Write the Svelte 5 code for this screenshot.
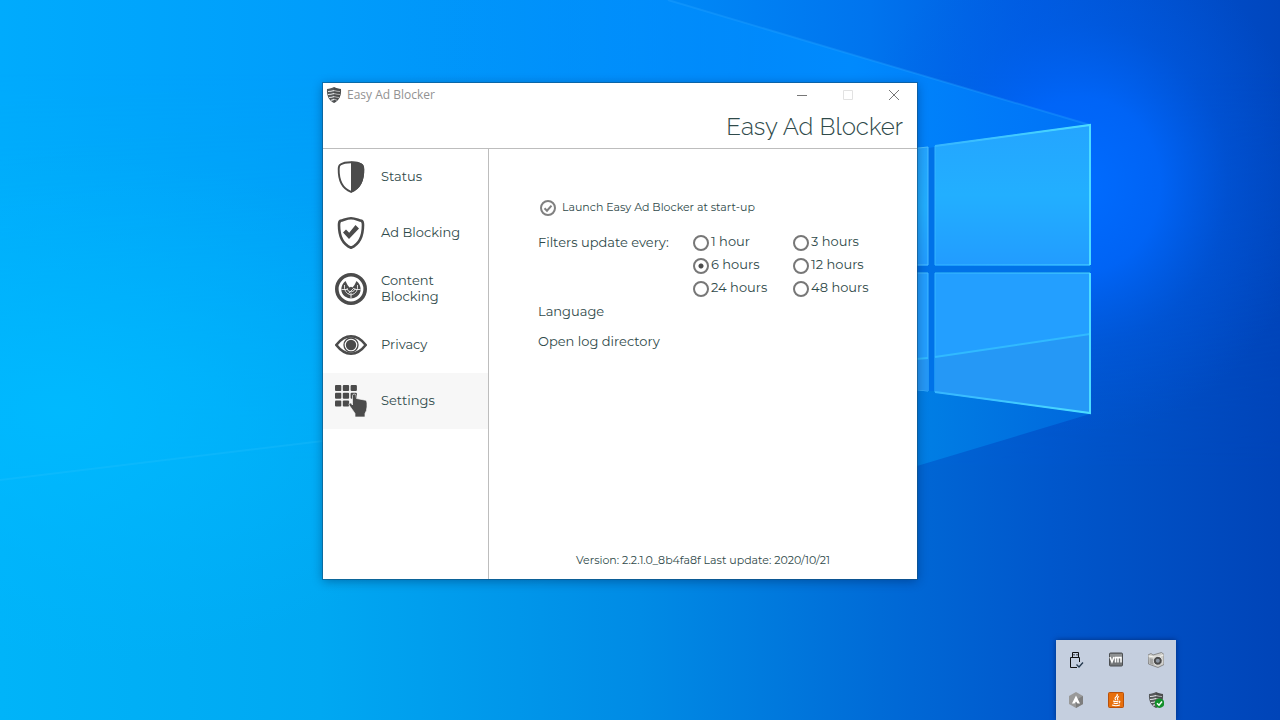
<script lang="ts">
  type Page = { id: string; label: string };

  const pages: Page[] = [
    { id: 'status', label: 'Status' },
    { id: 'ads', label: 'Ad Blocking' },
    { id: 'content', label: 'Content Blocking' },
    { id: 'privacy', label: 'Privacy' },
    { id: 'settings', label: 'Settings' }
  ];

  const intervals = [
    { hours: 1, label: '1 hour' },
    { hours: 3, label: '3 hours' },
    { hours: 6, label: '6 hours' },
    { hours: 12, label: '12 hours' },
    { hours: 24, label: '24 hours' },
    { hours: 48, label: '48 hours' }
  ];

  const trayItems = ['Safely remove hardware', 'VMware Tools', 'Camera', 'Updates', 'Java', 'Easy Ad Blocker'];

  let current = $state('settings');
  let launchAtStartup = $state(true);
  let updateEvery = $state(6);
</script>

{#snippet stripedShield()}
  <path d="M8 0C10 1.200 12.500 1.800 15 2C15.500 9 13 13.500 8 16C3 13.500 .5 9 1 2C3.500 1.800 6 1.200 8 0Z" fill="#55585a" />
  <path d="M2 4.500Q5 4.500 8 3.500Q11 4.500 14 4.500M2 7.500Q5 7.500 8 6.500Q11 7.500 14 7.500M3 10.500Q6 10.500 8 9.500Q11 10.500 13 10.500M5 13.200Q7 13 8 12.300Q10 13 11 13.200" fill="none" stroke="#e4e6e8" stroke-width="1.100" />
  <path d="M8 0C10 1.200 12.500 1.800 15 2C15.500 9 13 13.500 8 16Z" fill="#333" fill-opacity=".3" />
{/snippet}

<div class="desktop">
  <svg class="wallpaper" viewBox="0 0 1280 720" preserveAspectRatio="xMidYMid slice" aria-hidden="true">
    <defs>
      <linearGradient id="sky" x1="0" y1="0" x2="1" y2="0">
        <stop offset="0" stop-color="#00abfd" />
        <stop offset=".25" stop-color="#009dfb" />
        <stop offset=".5" stop-color="#008cf8" />
        <stop offset=".68" stop-color="#0074ee" />
        <stop offset=".8" stop-color="#005ce0" />
        <stop offset="1" stop-color="#0046be" />
      </linearGradient>
      <linearGradient id="floor" x1="0" y1="0" x2="1" y2="0">
        <stop offset="0" stop-color="#00b4f9" />
        <stop offset=".25" stop-color="#00a8f2" />
        <stop offset=".5" stop-color="#008be5" />
        <stop offset=".7" stop-color="#0069d6" />
        <stop offset=".82" stop-color="#0057cc" />
        <stop offset="1" stop-color="#0044b8" />
      </linearGradient>
      <linearGradient id="fade" x1="0" y1="0" x2="0" y2="1">
        <stop offset=".1" stop-color="#000" />
        <stop offset=".65" stop-color="#fff" />
      </linearGradient>
      <mask id="lower"><rect width="1280" height="720" fill="url(#fade)" /></mask>
      <radialGradient id="left">
        <stop offset="0" stop-color="#00baff" stop-opacity=".9" />
        <stop offset="1" stop-color="#00b4ff" stop-opacity="0" />
      </radialGradient>
      <radialGradient id="halo">
        <stop offset="0" stop-color="#006cff" />
        <stop offset=".35" stop-color="#0068ff" stop-opacity=".8" />
        <stop offset=".65" stop-color="#0060f0" stop-opacity=".3" />
        <stop offset="1" stop-color="#005ce8" stop-opacity="0" />
      </radialGradient>
      <linearGradient id="beamTop" x1="0" y1="0" x2="1" y2="0">
        <stop offset="0" stop-color="#0094ff" stop-opacity="0" />
        <stop offset=".65" stop-color="#008cff" stop-opacity=".9" />
        <stop offset="1" stop-color="#0073f6" stop-opacity=".9" />
      </linearGradient>
      <linearGradient id="beamLow" x1="0" y1="0" x2="1" y2="0">
        <stop offset="0" stop-color="#00a2ee" stop-opacity="0" />
        <stop offset=".7" stop-color="#0086e8" stop-opacity=".9" />
        <stop offset="1" stop-color="#006ade" stop-opacity=".9" />
      </linearGradient>
      <linearGradient id="paneTop" x1="0" y1="0" x2="0" y2="1">
        <stop offset="0" stop-color="#24a5ff" />
        <stop offset=".5" stop-color="#22afff" />
        <stop offset="1" stop-color="#229cff" />
      </linearGradient>
      <linearGradient id="edge" x1="0" y1="0" x2="1" y2="0">
        <stop offset="0" stop-color="#35b5ff" />
        <stop offset="1" stop-color="#4cdcff" />
      </linearGradient>
    </defs>
    <rect width="1280" height="720" fill="url(#sky)" />
    <rect width="1280" height="720" fill="url(#floor)" mask="url(#lower)" />
    <ellipse cx="60" cy="410" rx="420" ry="260" fill="url(#left)" />
    <ellipse cx="1080" cy="185" rx="230" ry="250" fill="url(#halo)" />
    <path d="M668 0L1090 125V268H400V0Z" fill="url(#beamTop)" />
    <path d="M668 0L1090 125" stroke="#26a4ff" stroke-opacity=".35" stroke-width="2" />
    <path d="M400 268H1090V414L917 466L540 586L400 560Z" fill="url(#beamLow)" />
    <path d="M0 480L323 441" stroke="#35c6ff" stroke-opacity=".2" stroke-width="2" />
    <path d="M917 266H1091V272H917ZM928 148L935 147V391H928Z" fill="#0072e8" />
    <path d="M880 152L928 147V265H880Z" fill="url(#paneTop)" stroke="#4cbfff" />
    <path d="M935 146L1090 125V265H935Z" fill="url(#paneTop)" stroke="url(#edge)" />
    <path d="M880 273H928V391L880 386Z" fill="#239fff" stroke="#45baff" />
    <path d="M935 273H1090V413L935 392Z" fill="#239fff" stroke="url(#edge)" />
    <path d="M935 357L1090 334V413L935 392ZM880 362L928 358V391L880 386Z" fill="#2598f6" />
    <path d="M935 357L1090 334M880 362L928 358" stroke="#31baff" stroke-width="2" />
    <path d="M935 392L1090 413V273M1090 265V125L935 146" fill="none" stroke="url(#edge)" stroke-width="2" />
  </svg>

  <main class="window">
    <div class="titlebar">
      <svg class="app-icon" viewBox="0 0 16 16" aria-hidden="true">{@render stripedShield()}</svg>
      <span class="caption">Easy Ad Blocker</span>
      <button class="window-button" aria-label="Minimize">
        <svg viewBox="0 0 10 10"><path d="M0 5.500H10" /></svg>
      </button>
      <button class="window-button" aria-label="Maximize" disabled>
        <svg viewBox="0 0 10 10"><path d="M.5 .5H9.500V9.500H.5Z" /></svg>
      </button>
      <button class="window-button" aria-label="Close">
        <svg viewBox="0 0 10 10"><path d="M0 0L10 10M10 0L0 10" /></svg>
      </button>
    </div>

    <header>
      <h1>Easy Ad Blocker</h1>
    </header>

    <div class="body">
      <nav>
        {#each pages as page}
          <button class="nav-item" class:active={current === page.id} onclick={() => (current = page.id)}>
            <svg viewBox="0 0 32 32" aria-hidden="true">
              {#if page.id === 'status'}
                <path d="M16 1.200C20 1.200 24 1.800 26.500 3.500Q28.300 4.500 28.300 8C28.500 18 26 27 16 30.800C6 27 3.500 18 3.700 8Q3.700 4.500 5.500 3.500C8 1.800 12 1.200 16 1.200Z" fill="#fff" stroke="#4b4b4b" stroke-width="1.900" />
                <path d="M16 .5C20 .5 24.500 1.200 27 2.800Q29 4 29.200 8C29.500 18 26.500 28 16 31.700Z" fill="#4b4b4b" />
              {:else if page.id === 'ads'}
                <path d="M16 1.300C20 1.300 23 3 26.500 3.800Q28 4.500 28 8C28 18 25 27 16 30.700C7 27 4 18 4 8Q4 4.500 5.500 3.800C9 3 12 1.300 16 1.300Z" fill="#fff" stroke="#4b4b4b" stroke-width="2.600" />
                <path d="M8 15.500L11 12.500L14.200 15.700L20.500 8L24 11.500L14 22Z" fill="#4b4b4b" />
              {:else if page.id === 'content'}
                <circle cx="16" cy="16" r="14.200" fill="#fff" stroke="#4b4b4b" stroke-width="3.600" />
                <path d="M10.500 8L12.500 12L14.500 14.500L16 13.800L17.500 14.500L19.500 12L21.500 8C27 12.500 27 20 22 23.500Q16 27.500 10 23.500C5 20 5 12.500 10.500 8Z" fill="#4b4b4b" />
                <path d="M6.500 16.500H12M20 16.500H25.500M16 20V25.500M9.500 12Q8.500 20 16 22Q23.500 20 22.500 12M12 15Q12 18.500 16 19Q20 18.500 20 15M13.500 20.500L19 15" fill="none" stroke="#fff" stroke-width=".8" />
              {:else if page.id === 'privacy'}
                <path d="M1.300 16Q8 7.300 16 7.300T30.700 16Q24 24.700 16 24.700T1.300 16Z" fill="#fff" stroke="#4b4b4b" stroke-width="2.600" />
                <circle cx="16" cy="16" r="7" fill="none" stroke="#4b4b4b" stroke-width="1.300" />
                <circle cx="16" cy="16" r="5.200" fill="#4b4b4b" />
              {:else}
                <g fill="#4b4b4b">
                  <rect x="0" y="0" width="6.300" height="6" rx="1" />
                  <rect x="7.800" y="0" width="6.300" height="6" rx="1" />
                  <rect x="15.600" y="0" width="6.300" height="6" rx="1" />
                  <rect x="0" y="7.800" width="6.300" height="6" rx="1" />
                  <rect x="7.800" y="7.800" width="6.300" height="6" rx="1" />
                  <rect x="15.600" y="7.800" width="6.300" height="6" rx="1" />
                  <rect x="0" y="15.600" width="6.300" height="6" rx="1" />
                  <rect x="7.800" y="15.600" width="6.300" height="6" rx="1" />
                </g>
                <path d="M17.500 10.500Q17.700 9 19.300 9Q20.900 9 21 10.500L21.500 13.500L30.500 15.200Q32 15.800 32 18V22Q31.800 26 30 28.500V32H20V28.500Q17 24 14 20Q13.500 18 15.500 18Q16.500 18.500 17.500 20Z" fill="#4b4b4b" stroke="#f7f7f7" stroke-width=".7" />
              {/if}
            </svg>
            <span>{page.label}</span>
          </button>
        {/each}
      </nav>

      <section class="settings">
        <label class="startup">
          <input type="checkbox" bind:checked={launchAtStartup} />
          <svg viewBox="0 0 16 16" aria-hidden="true">
            <circle cx="8" cy="8" r="7" />
            {#if launchAtStartup}<path d="M4.500 8.200L7 10.700L11.500 5.700" />{/if}
          </svg>
          <span>Launch Easy Ad Blocker at start-up</span>
        </label>

        <div class="filters" role="radiogroup" aria-labelledby="filters-label">
          <span id="filters-label">Filters update every:</span>
          <div class="options">
            {#each intervals as interval}
              <label>
                <input type="radio" name="interval" value={interval.hours} bind:group={updateEvery} />
                <span>{interval.label}</span>
              </label>
            {/each}
          </div>
        </div>

        <button class="link">Language</button>
        <button class="link">Open log directory</button>

        <footer>Version: 2.2.1.0_8b4fa8f Last update: 2020/10/21</footer>
      </section>
    </div>
  </main>

  <aside class="tray">
    {#each trayItems as item, i}
      <button aria-label={item}>
        <svg viewBox="0 0 16 16" aria-hidden="true">
          {#if i === 0}
            <path d="M4.500 5V.5H10.500V5M2.500 15.500V5.500H11.500V10M2.500 15.500H9M6 2V3.500M9 2V3.500" fill="none" stroke="#111" />
            <path d="M8.500 12.500L11 15L15 10.500" fill="none" stroke="#23384d" stroke-width="1.300" />
          {:else if i === 1}
            <rect x="1.500" y="1" width="13" height="13" rx="1" fill="#717476" stroke="#4c4f52" />
            <path d="M2 2H14V7H2Z" fill="#8e9192" />
            <path d="M2 5L4 10L6 5M7.500 10.500V5.500H10V10.500M10 5.500H13V10.500" fill="none" stroke="#fff" stroke-width="1.500" />
          {:else if i === 2}
            <path d="M0 3L3 1.500L5 3L13.500 .5L16 2.500V12.500L10 15.500L.5 12Z" fill="#d0d0cc" stroke="#777" stroke-width=".8" />
            <path d="M.5 4L9 5.500L15.500 3" fill="none" stroke="#f4f4f0" />
            <path d="M1.500 6L5.500 7V13L1.500 11.500Z" fill="#a4a4a2" />
            <circle cx="9.800" cy="8.800" r="4.400" fill="#4a4a4a" stroke="#eee" stroke-width=".8" />
            <circle cx="9.800" cy="8.800" r="2" fill="#8d96a2" />
          {:else if i === 3}
            <path d="M8 0L15 4V12L8 16L1 12V4Z" fill="#999" />
            <path d="M8 16L15 12V4L8 8Z" fill="#7e7e7e" />
            <path d="M8 3.500L12 11.500H9.500L8 9.500L6.500 11.500H4Z" fill="#fff" />
          {:else if i === 4}
            <rect x=".5" y=".5" width="15" height="15" rx="1" fill="#e76f0c" stroke="#b9510a" />
            <path d="M9 2Q10 3.500 8 5T8 8M11 4.500Q8.500 5.500 10 8M5 9Q8 10 10.500 9M5.500 11Q8 12 10 11M11 9Q13 9.500 10.800 11.300M4 13Q8 14.500 12 13" fill="none" stroke="#fff" stroke-width="1.100" />
          {:else}
            {@render stripedShield()}
            <circle cx="11.500" cy="11.200" r="4.800" fill="#12902a" />
            <path d="M9 11.300L11 13.200L14 9.500" fill="none" stroke="#fff" stroke-width="1.500" />
          {/if}
        </svg>
      </button>
    {/each}
  </aside>
</div>

<style>
  :global(body) {
    margin: 0;
  }

  .desktop {
    position: relative;
    min-height: 100vh;
    overflow: hidden;
    background: #0090f0;
    font-family: Montserrat, Inter, sans-serif;
    font-size: 13px;
    line-height: 16px;
    color: #2f4a4a;
  }

  button {
    border: 0;
    padding: 0;
    background: none;
    font: inherit;
    color: inherit;
    text-align: left;
  }

  .wallpaper {
    position: absolute;
    inset: 0;
    width: 100%;
    height: 100%;
  }

  .window {
    position: absolute;
    left: 323px;
    top: 83px;
    width: 594px;
    min-height: 496px;
    display: flex;
    flex-direction: column;
    background: #fff;
    box-shadow: 0 0 0 1px rgba(20, 80, 120, 0.55), 0 2px 10px rgba(0, 20, 60, 0.4);
  }

  .titlebar {
    display: flex;
    align-items: center;
    height: 24px;
    padding-left: 3px;
  }

  .app-icon {
    width: 16px;
    height: 16px;
  }

  .caption {
    flex: 1;
    padding-left: 5px;
    font-family: 'Open Sans', sans-serif;
    font-size: 12px;
    color: #929292;
  }

  .window-button {
    display: flex;
    align-items: center;
    justify-content: center;
    width: 46px;
    height: 24px;
  }

  .window-button svg {
    width: 10px;
    height: 10px;
    fill: none;
    stroke: #777;
    overflow: visible;
  }

  .window-button:disabled svg {
    stroke: #e2e2e2;
  }

  header {
    padding: 4px 14px 5px;
    border-bottom: 1px solid #bdbdbd;
    text-align: right;
  }

  h1 {
    margin: 0;
    font-family: Raleway, Lato, sans-serif;
    font-size: 24px;
    font-weight: 300;
    line-height: 32px;
  }

  .body {
    flex: 1;
    display: flex;
  }

  nav {
    flex: none;
    width: 165px;
    border-right: 1px solid #bdbdbd;
  }

  .nav-item {
    display: flex;
    align-items: center;
    gap: 14px;
    width: 100%;
    height: 56px;
    padding: 0 12px;
  }

  .nav-item.active {
    background: #f7f7f7;
  }

  .nav-item svg {
    flex: none;
    width: 32px;
    height: 32px;
  }

  .nav-item span {
    padding-bottom: 2px;
  }

  .settings {
    flex: 1;
    display: flex;
    flex-direction: column;
    align-items: flex-start;
    padding: 51px 24px 11px 49px;
  }

  .startup {
    display: flex;
    gap: 6px;
    padding-left: 2px;
    font-size: 11px;
    line-height: 14px;
  }

  .startup input {
    position: absolute;
    opacity: 0;
    margin: 0;
  }

  .startup svg {
    width: 16px;
    height: 16px;
    fill: none;
    stroke: #808080;
    stroke-width: 2;
  }

  .filters {
    display: flex;
    margin: 19px 0 6px;
    line-height: 14px;
  }

  #filters-label {
    flex: none;
    width: 155px;
  }

  .options {
    display: grid;
    grid-template-columns: 100px 100px;
    row-gap: 7px;
    line-height: 12px;
  }

  .options label {
    display: flex;
    gap: 2px;
    white-space: nowrap;
  }

  input[type='radio'] {
    flex: none;
    appearance: none;
    width: 16px;
    height: 16px;
    margin: 0;
    border: 2px solid #777;
    border-radius: 50%;
  }

  input[type='radio']:checked {
    background: radial-gradient(circle, #4b4b4b 2px, transparent 3px);
  }

  .link {
    margin-bottom: 14px;
  }

  footer {
    align-self: center;
    margin-top: auto;
    padding-right: 25px;
    font-size: 11px;
  }

  .tray {
    position: absolute;
    right: 104px;
    bottom: 0;
    display: grid;
    grid-template-columns: repeat(3, 40px);
    grid-auto-rows: 40px;
    background: #c5cfdf;
    box-shadow: 0 0 5px rgba(0, 10, 50, 0.5);
  }

  .tray button {
    display: grid;
    place-items: center;
  }

  .tray svg {
    width: 16px;
    height: 16px;
  }
</style>
